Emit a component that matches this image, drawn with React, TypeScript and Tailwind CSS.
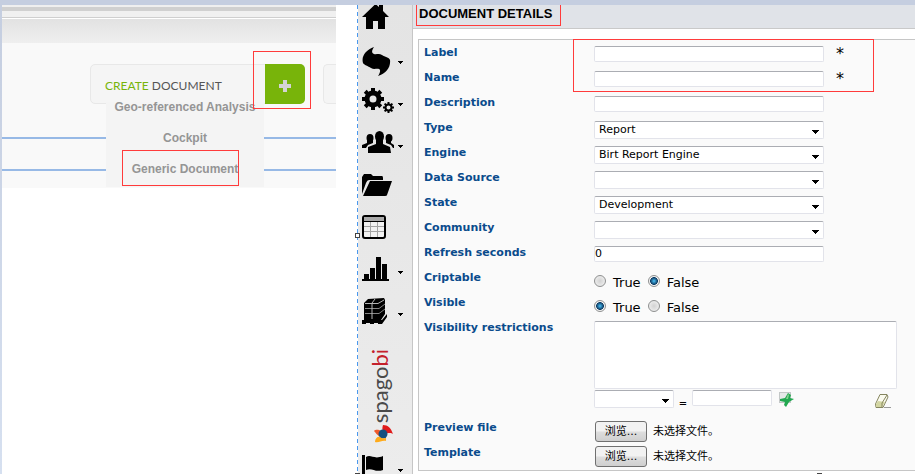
import React, { useRef } from 'react';

const FIELD =
  'box-border rounded-xs border border-[#e2e3ea] border-t-[#abadb3] bg-white text-black outline-none';
const BODY_FONT = "font-['DejaVu_Sans','Noto_Sans_CJK_SC',sans-serif]";
const MARK = 'pointer-events-none absolute border border-[#ff3b3b]';

function Teeth({ cx, cy, r, w, h }: { cx: number; cy: number; r: number; w: number; h: number }) {
  return (
    <>
      {[0, 45, 90, 135, 180, 225, 270, 315].map((a) => (
        <rect key={a} x={cx - w / 2} y={cy - r} width={w} height={h} transform={`rotate(${a} ${cx} ${cy})`} />
      ))}
    </>
  );
}

function HomeIcon() {
  return (
    <svg width="28" height="26" viewBox="0 0 28 26">
      <path d="M13.5 0 L17 3 V1 H21 V7 L27 13 H23 V25 H16 V17 H11 V25 H4 V13 H0 Z" />
    </svg>
  );
}

function SwirlIcon() {
  return (
    <svg width="30" height="36" viewBox="0 -6 30 36">
      <path d="M12 0 C4 3 -1 9 1 16 C2 18 6 19 9 21 C12 23 15 21 17 22 C19 23 18 26 16 29 C24 27 29 20 28 13 C27 10 23 10 20 8 C17 6 14 8 12 7 C9 6 10 3 12 0 Z" />
    </svg>
  );
}

function GearsIcon() {
  return (
    <svg width="33" height="26" viewBox="0 0 33 26">
      <circle cx="11" cy="11" r="6" fill="none" stroke="black" strokeWidth="5" />
      <Teeth cx={11} cy={11} r={11} w={4} h={4} />
      <circle cx="26.500" cy="19.500" r="3" fill="none" stroke="black" strokeWidth="2" />
      <Teeth cx={26.5} cy={19.5} r={5.5} w={2} h={2} />
    </svg>
  );
}

function PeopleIcon() {
  return (
    <svg width="33" height="24" viewBox="0 0 33 24">
      <ellipse cx="8" cy="7" rx="3.500" ry="4" />
      <ellipse cx="27" cy="7" rx="3.500" ry="4" />
      <path d="M0 17 V14 L5 12 V9 H11 V12 L6 14 L4 17 Z" />
      <path d="M32 17 V14 L29 12 V9 H24 V12 L29 14 L31 17 Z" />
      <ellipse cx="17.500" cy="5.500" rx="4.500" ry="5.500" />
      <path d="M14 8 H21 V13 L28 16 L29 22 H6 V16 L14 13 Z" />
    </svg>
  );
}

function FolderIcon() {
  return (
    <svg width="31" height="23" viewBox="0 0 31 23">
      <path d="M0 20 V3 L2 0 H9 L11 2 H20 Q21 2 21 4 V6 H7 Q5 6 4 9 Z" />
      <path d="M8 7 H30 L25 21 Q25 22 23 22 H1 Z" />
    </svg>
  );
}

function TableIcon() {
  return (
    <svg width="24" height="24" viewBox="0 0 24 24">
      <rect x="1" y="1" width="22" height="22" rx="2" fill="#f2f2f2" stroke="black" strokeWidth="2" />
      <rect x="2" y="2" width="20" height="4" fill="#a9a9a9" />
      <path d="M2 6.500 H22" stroke="black" />
      <path d="M2 11.500 H22 M2 16.500 H22 M8.500 7 V22 M15.500 7 V22" stroke="#a4a4a4" />
    </svg>
  );
}

function ChartIcon() {
  return (
    <svg width="27" height="24" viewBox="0 0 27 24">
      <path d="M0 22 H27 V24 H0 Z M2 17 H7 V22 H2 Z M8 11 H13 V22 H8 Z M14 0 H19 V22 H14 Z M20 7 H25 V22 H20 Z" />
    </svg>
  );
}

function CubeIcon() {
  return (
    <svg width="26" height="27" viewBox="0 0 26 27">
      <path d="M2 5 L6 1 L22 0 L23 2 L23 16 L19 22 H2 Z" />
      <path d="M0 22 H20 L25 16 V19 L20 26 H16 V25 H12 V26 H8 V25 H4 V26 H0 Z" />
      <path d="M3 5.500 H16 L22 2" fill="none" stroke="#b5b5b5" />
      <path d="M3 10.500 H17 L23 6 M3 15.500 H17 L23 11" fill="none" stroke="#858585" />
      <path d="M10 5 V21 M10 5 L13 1" fill="none" stroke="#b5b5b5" />
    </svg>
  );
}

function FlagIcon() {
  return (
    <svg width="22" height="24" viewBox="0 0 22 24">
      <path d="M0 0 H3 V24 H0 Z M4 2 C9 -1 12 5 21 1 V15 C13 18 10 12 4 15 Z" />
    </svg>
  );
}

function BirdLogo() {
  return (
    <svg width="20" height="18" viewBox="0 0 20 18">
      <path d="M9 0 C14 0 17 3 19 9 C16 7 14 9 11 8 C8 7 8 3 9 0 Z" fill="#e01b1b" />
      <path d="M0 6 C2 4 5 5 7 6 L5 11 C3 10 2 8 0 6 Z" fill="#f0592a" />
      <circle cx="9" cy="9" r="4.500" fill="#15507f" />
      <path d="M1 17 C1 13 4 11 6 12 C8 14 10 13 12 13 L12 16 C8 15 5 18 1 17 Z" fill="#ffab1a" />
    </svg>
  );
}

function Caret({ className }: { className: string }) {
  return (
    <svg className={className} width="7" height="4" viewBox="0 0 7 4" shapeRendering="crispEdges">
      <path d="M0 0 H7 V1 H6 V2 H5 V3 H4 V4 H3 V3 H2 V2 H1 V1 H0 Z" />
    </svg>
  );
}

function NavItem({ label, menu, children }: { label: string; menu?: boolean; children: React.ReactNode }) {
  return (
    <button type="button" aria-label={label} className="flex h-[42px] w-full shrink-0 items-center pl-1">
      <span className="w-9 pb-1.5">{children}</span>
      {menu && (
        <svg width="5" height="3" viewBox="0 0 5 3" shapeRendering="crispEdges">
          <path d="M0 0 H5 V1 H4 V2 H3 V3 H2 V2 H1 V1 H0 Z" />
        </svg>
      )}
    </button>
  );
}

function Row({ label, id, children }: { label: string; id: string; children: React.ReactNode }) {
  return (
    <div className="grid min-h-[25px] grid-cols-[170px_1fr] items-start">
      <label htmlFor={id} className="text-[11px] leading-6 font-bold text-[#0a4b8c]">
        {label}
      </label>
      <div className="pt-[5px]">{children}</div>
    </div>
  );
}

function TextField({ id, value, required }: { id: string; value?: string; required?: boolean }) {
  return (
    <div className="flex h-4 items-center gap-3">
      <input id={id} type="text" defaultValue={value} className={`${FIELD} h-4 w-[230px] text-[11px]`} />
      {required && <span className="text-base leading-4">*</span>}
    </div>
  );
}

function Select({ id, value, wide = true }: { id: string; value: string; wide?: boolean }) {
  return (
    <div className={wide ? 'relative w-[230px]' : 'relative w-20'}>
      <select
        id={id}
        aria-label={id}
        defaultValue={value}
        className={`${FIELD} block h-[18px] w-full appearance-none pl-1 text-[11px] leading-4`}
      >
        <option>{value}</option>
      </select>
      <Caret className="pointer-events-none absolute top-[9px] right-[5px]" />
    </div>
  );
}

function Radio({ id, name, label, checked }: { id?: string; name: string; label: string; checked?: boolean }) {
  return (
    <label className="flex items-start text-[13px] leading-4">
      <input
        id={id}
        type="radio"
        name={name}
        defaultChecked={checked}
        className="size-3 appearance-none rounded-full border border-[#8e8f8f] bg-radial from-[#d2d2d2] to-[#f6f6f6] ring-inset checked:from-[#3fa9dd] checked:from-10% checked:via-[#0f3f66] checked:via-50% checked:to-[#f4f4f4] checked:to-60%"
      />
      <span className="pl-[7px]">{label}</span>
    </label>
  );
}

function RadioPair({ name, value }: { name: string; value: boolean }) {
  return (
    <div className="flex gap-[7px] pt-1">
      <Radio id={name} name={name} label="True" checked={value} />
      <Radio name={name} label="False" checked={!value} />
    </div>
  );
}

function FilePicker({ id }: { id: string }) {
  const input = useRef<HTMLInputElement>(null);
  return (
    <div className="flex items-center gap-1.5 pl-px text-[11px] leading-4 font-normal">
      <input ref={input} id={id} type="file" className="hidden" />
      <button
        type="button"
        onClick={() => input.current?.click()}
        className="h-[21px] w-[52px] rounded-[3px] border border-[#707070] bg-linear-to-b from-[#f2f2f2] from-45% via-[#dddddd] via-55% to-[#cfcfcf] leading-4"
      >
        浏览...
      </button>
      <span>未选择文件。</span>
    </div>
  );
}

function CreatePanel() {
  return (
    <section className="mr-[21px] bg-[#f9f9f9] font-['Liberation_Sans',sans-serif]">
      <div className="h-0.5 bg-[#efefef]" />
      <div className="h-1 bg-[#d0d0d0]" />
      <div className="h-[7px] border-b border-[#cfcfcf] bg-[#f0f0f0]" />
      <div className="h-[25px] border-t border-white bg-linear-to-b from-[#e2e2e2] to-[#efefef]" />
      <div className="mt-[21px] flex h-10 justify-between pl-[88px]">
        <div className="relative flex w-[215px] rounded-[5px] border border-[#e8e8e8] bg-[#f5f5f5]">
          <h2 className="flex-1 self-center pt-1 pl-3.5 font-['Lato',sans-serif] text-xs leading-4 text-[#555]">
            <span className="text-[#78b40a]">CREATE</span> DOCUMENT
          </h2>
          <button
            type="button"
            aria-label="Create document"
            className="-m-px flex w-10 items-center justify-center rounded-r-[5px] bg-[#78b40a]"
          >
            <svg width="12" height="12" viewBox="0 0 12 12" className="mt-1">
              <path d="M4 0 H8 V4 H12 V8 H8 V12 H4 V8 H0 V4 H4 Z" fill="#d4d4d4" />
            </svg>
          </button>
          <ul className="absolute top-[37px] left-[15px] w-[158px] bg-[#f4f4f4] pb-[7px] text-center text-xs font-bold text-[#959595]">
            <li className="h-[22px] leading-[10px]">
              <a href="#geo">Geo-referenced Analysis</a>
            </li>
            <li className="h-[31px] leading-7">
              <a href="#cockpit">Cockpit</a>
            </li>
            <li className="relative h-[25px] leading-7">
              <a href="#generic">Generic Document</a>
              <span className={`${MARK} -top-[5px] left-4 h-9 w-[117px]`} />
            </li>
          </ul>
          <span className={`${MARK} -top-3.5 -right-[7px] h-[58px] w-[58px]`} />
        </div>
        <div className="w-[13px] rounded-l-[5px] border border-r-0 border-[#e8e8e8] bg-[#f5f5f5]" />
      </div>
      <div className="mt-[33px] h-0.5 bg-[#97b9e6]" />
      <div className="mt-[30px] h-0.5 bg-[#97b9e6]" />
      <div className="h-[17px]" />
    </section>
  );
}

function Sidebar() {
  return (
    <nav className="relative flex w-[56px] shrink-0 flex-col border-r border-[#c6c6c6] bg-linear-to-b from-[#e4e4e4] to-[#ececec]">
      <div className="absolute inset-y-0 left-0 w-px bg-[repeating-linear-gradient(to_bottom,#4a98ee_0,#4a98ee_4px,#ffffff_4px,#ffffff_7px)]" />
      <span className="absolute top-[228px] -left-0.5 size-[5px] border border-[#444] bg-white" />
      <span className="absolute bottom-0 -left-0.5 h-px w-[5px] bg-[#444]" />
      <div className="-mt-[6px] flex flex-col pl-px">
        <NavItem label="Home">
          <HomeIcon />
        </NavItem>
        <NavItem label="Refresh" menu>
          <SwirlIcon />
        </NavItem>
        <NavItem label="Settings" menu>
          <GearsIcon />
        </NavItem>
        <NavItem label="Users" menu>
          <PeopleIcon />
        </NavItem>
        <NavItem label="Folders">
          <FolderIcon />
        </NavItem>
        <NavItem label="Tables">
          <TableIcon />
        </NavItem>
        <NavItem label="Charts" menu>
          <ChartIcon />
        </NavItem>
        <NavItem label="Catalogue" menu>
          <CubeIcon />
        </NavItem>
        <div className="flex h-[114px] flex-col items-start justify-end gap-0.5 pb-1.5 pl-2.5">
          <span className="rotate-180 font-['Lato',sans-serif] text-[22px] leading-6 text-[#4a4a4a] [writing-mode:vertical-rl]">
            spago<span className="text-[#c4202b]">bi</span>
          </span>
          <span className="pl-1.5">
            <BirdLogo />
          </span>
        </div>
        <NavItem label="Flags" menu>
          <FlagIcon />
        </NavItem>
      </div>
    </nav>
  );
}

function DetailsForm() {
  return (
    <main className="relative min-w-0 flex-1">
      <header className="h-6 border-b border-[#c9c9c9] bg-[#e0e3e8] pl-[3px]">
        <h1 className="h-[21px] w-[145px] border border-t-0 border-[#ff3b3b] pl-0.5 font-['Liberation_Sans',sans-serif] text-[13px] leading-[18px] font-bold whitespace-nowrap text-black">
          DOCUMENT DETAILS
        </h1>
      </header>
      <form
        className={`relative mt-2.5 ml-[5px] border border-r-0 border-[#c6c6c6] bg-[#fafafa] pt-px pb-1 pl-[5px] ${BODY_FONT}`}
      >
        <Row label="Label" id="label">
          <TextField id="label" required />
        </Row>
        <Row label="Name" id="name">
          <TextField id="name" required />
        </Row>
        <Row label="Description" id="description">
          <TextField id="description" />
        </Row>
        <Row label="Type" id="type">
          <Select id="type" value="Report" />
        </Row>
        <Row label="Engine" id="engine">
          <Select id="engine" value="Birt Report Engine" />
        </Row>
        <Row label="Data Source" id="source">
          <Select id="source" value="" />
        </Row>
        <Row label="State" id="state">
          <Select id="state" value="Development" />
        </Row>
        <Row label="Community" id="community">
          <Select id="community" value="" />
        </Row>
        <Row label="Refresh seconds" id="refresh">
          <TextField id="refresh" value="0" />
        </Row>
        <Row label="Criptable" id="criptable">
          <RadioPair name="criptable" value={false} />
        </Row>
        <Row label="Visible" id="visible">
          <RadioPair name="visible" value={true} />
        </Row>
        <Row label="Visibility restrictions" id="restrictions">
          <textarea id="restrictions" className={`${FIELD} block h-[68px] w-[303px] resize-none`} />
          <div className="flex h-[27px] w-[303px] items-start pt-px">
            <Select id="attribute" value="" wide={false} />
            <span className="w-[18px] pt-1.5 text-center text-[10px] leading-4">=</span>
            <input type="text" aria-label="value" className={`${FIELD} h-4 w-20 text-[11px]`} />
            <button type="button" aria-label="Add restriction" className="pt-0.5 pl-[7px]">
              <svg width="15" height="15" viewBox="0 0 15 15">
                <rect x="0.500" y="0.500" width="11" height="10" fill="#e6e8e8" stroke="#c3c7c7" />
                <path d="M9 1 L12 3 L11 6 L15 7 L10 10 L7 15 L5 13 L6 10 L1 9 L1 7 L6 6 Z" fill="#22a850" />
                <path d="M9 2 L10 3 L9 7 L7 7 Z" fill="#86cf90" />
              </svg>
            </button>
            <button type="button" aria-label="Clear" className="ml-auto pt-1 pr-1.5">
              <svg width="16" height="15" viewBox="0 0 16 15">
                <path d="M5 0.500 H12 L13 3 L8 13.500 H1 L0.500 10 Z" fill="#fbfbef" stroke="#85855f" />
                <path d="M3 7 L10 8 L7 13 H1 V10 Z" fill="#d3d6a2" />
                <path d="M7 13 L7 9 L12 1" fill="none" stroke="#85855f" />
                <path d="M9 13.500 H16" stroke="#999" />
              </svg>
            </button>
          </div>
        </Row>
        <Row label="Preview file" id="preview">
          <div className="h-5">
            <FilePicker id="preview" />
          </div>
        </Row>
        <Row label="Template" id="template">
          <div className="h-5">
            <FilePicker id="template" />
          </div>
        </Row>
        <span className={`${MARK} -top-px left-[154px] h-[53px] w-[301px]`} />
      </form>
      <span className="absolute bottom-0 left-[404px] h-px w-[5px] bg-[#444]" />
    </main>
  );
}

export default function App() {
  return (
    <div className="flex h-screen overflow-hidden border-t-[5px] border-[#c5cee0] bg-white">
      <div className="w-0.5 shrink-0 bg-linear-to-b from-[#c5cee0] to-[#d6e0f0]" />
      <div className="w-[355px] shrink-0">
        <CreatePanel />
      </div>
      <Sidebar />
      <DetailsForm />
    </div>
  );
}
